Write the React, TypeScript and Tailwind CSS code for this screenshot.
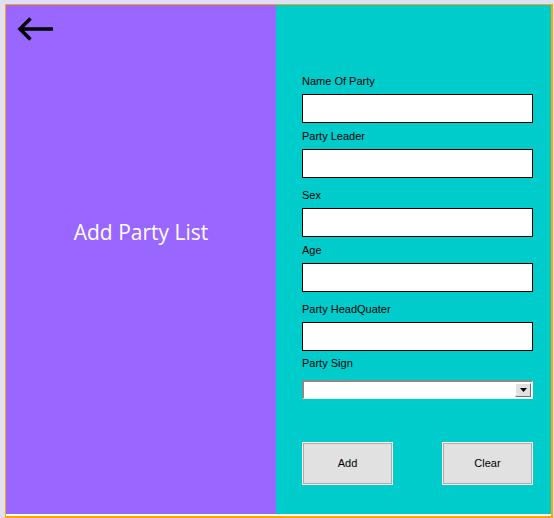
import React from "react";

const fields = [
  { label: "Name Of Party", mt: "mt-0" },
  { label: "Party Leader", mt: "mt-[7px]" },
  { label: "Sex", mt: "mt-[11px]" },
  { label: "Age", mt: "mt-[7px]" },
  { label: "Party HeadQuater", mt: "mt-[11px]" },
];

function BackArrow() {
  return (
    <svg width="38" height="26" viewBox="0 0 38 26" fill="none" stroke="black" strokeWidth="3.5">
      <path d="M4 13H37" />
      <path d="M14.5 2.5L4 13L14.5 23.5" strokeLinejoin="miter" />
    </svg>
  );
}

export default function App() {
  return (
    <div className="w-[554px] h-[518px] bg-[#dfdff6] pt-[4px] pl-[5px] font-['Liberation_Sans',Arial,sans-serif]">
      <div className="w-[548px] h-[514px] border-t border-l border-r-2 border-b-2 border-[#ffa500] bg-white">
        <div className="flex h-[509px]">
          {/* left side panel */}
          <div className="w-[270px] bg-[#9966ff] flex flex-col">
            <div className="ml-[10px] mt-[11px]">
              <BackArrow />
            </div>
            <h1 className="mt-[176px] text-center text-white text-[21px] leading-[28px] font-['Open_Sans',sans-serif]">
              Add Party List
            </h1>
          </div>

          {/* form */}
          <div className="w-[275px] bg-[#00cccc] pl-[26px] pt-[70px] flex flex-col">
            {fields.map((f) => (
              <div key={f.label} className={f.mt}>
                <p className="text-[11px] leading-[13px] text-black mb-[6px]">{f.label}</p>
                <div className="w-[231px] h-[29px] bg-white border border-black" />
              </div>
            ))}

            <div className="mt-[6px]">
              <p className="text-[11px] leading-[13px] text-black mb-[10px]">Party Sign</p>
              <div className="w-[231px] h-[19px] bg-white border-t-2 border-l-2 border-[#8a8a8a] border-b border-r border-b-[#f0f0f0] border-r-[#f0f0f0] flex items-center justify-end pr-[1px]">
                <div className="w-[16px] h-[14px] bg-[#e1e1e1] border-t border-l border-white border-r border-b border-r-[#6f6f6f] border-b-[#6f6f6f] flex items-center justify-center">
                  <svg width="7" height="4" viewBox="0 0 7 4">
                    <polygon points="0,0 7,0 3.5,4" fill="black" />
                  </svg>
                </div>
              </div>
            </div>

            <div className="mt-[43px] w-[231px] flex justify-between">
              <button className="w-[91px] h-[43px] bg-[#e1e1e1] border border-white shadow-[inset_0_0_0_1px_#adadad] text-[11px] text-black">
                Add
              </button>
              <button className="w-[91px] h-[43px] bg-[#e1e1e1] border border-white shadow-[inset_0_0_0_1px_#adadad] text-[11px] text-black">
                Clear
              </button>
            </div>
          </div>
        </div>
      </div>
    </div>
  );
}
